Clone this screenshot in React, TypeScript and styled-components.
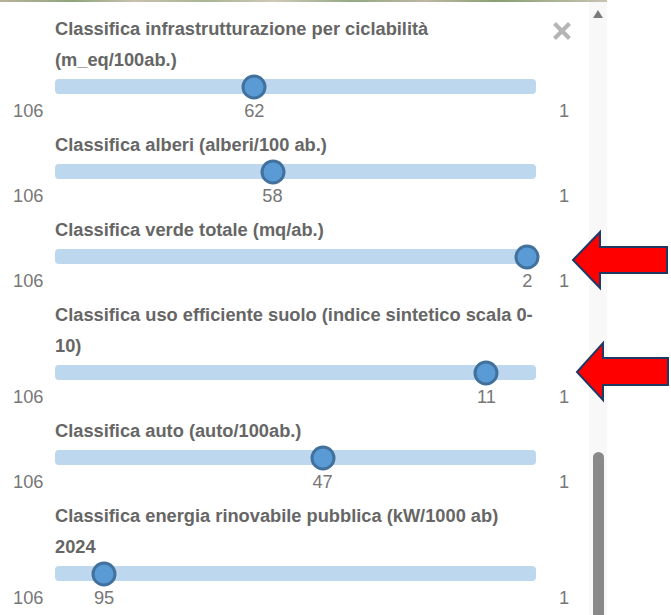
import React from 'react'
import styled, { createGlobalStyle } from 'styled-components'

const GlobalStyle = createGlobalStyle`
  html, body {
    margin: 0;
    padding: 0;
    background: #ffffff;
  }
  body {
    font-family: 'Liberation Sans', Arial, sans-serif;
  }
`

const MIN = 1
const MAX = 106

const rankings = [
  { title: 'Classifica infrastrutturazione per ciclabilità (m_eq/100ab.)', value: 62 },
  { title: 'Classifica alberi (alberi/100 ab.)', value: 58 },
  { title: 'Classifica verde totale (mq/ab.)', value: 2 },
  { title: 'Classifica uso efficiente suolo (indice sintetico scala 0-\u200B10)', value: 11 },
  { title: 'Classifica auto (auto/100ab.)', value: 47 },
  { title: 'Classifica energia rinovabile pubblica (kW/1000 ab) 2024', value: 95 },
]

const Page = styled.div`
  position: relative;
  width: 671px;
  height: 615px;
  overflow: hidden;
  background: #ffffff;
`

const MapEdge = styled.div`
  width: 607px;
  height: 2px;
  background: linear-gradient(
    90deg,
    #b8b29c 0%,
    #8fa57c 12%,
    #c7c0ad 22%,
    #a9b594 34%,
    #cfc8b8 45%,
    #93a983 58%,
    #bdb6a2 70%,
    #88a072 82%,
    #c9c3b3 100%
  );
`

const Frame = styled.div`
  display: flex;
  width: 607px;
  height: 613px;
`

const Panel = styled.div`
  position: relative;
  width: 589px;
  padding-top: 11px;
  background: #ffffff;
  overflow: hidden;
`

const CloseButton = styled.div`
  position: absolute;
  top: 20px;
  right: 18px;
  width: 18px;
  height: 18px;
  cursor: pointer;
`

const Gutter = styled.div`
  width: 18px;
  height: 613px;
  overflow: hidden;
  background: #f8f8f8;
  display: flex;
  flex-direction: column;
  align-items: center;
  padding-top: 8px;
  box-sizing: border-box;
`

const UpArrow = styled.div`
  width: 0;
  height: 0;
  border-left: 5px solid transparent;
  border-right: 5px solid transparent;
  border-bottom: 8px solid #7a7a7a;
`

const Thumb = styled.div`
  flex: none;
  margin-top: auto;
  margin-bottom: -12px;
  width: 11px;
  height: 175px;
  border-radius: 6px;
  background: #898989;
`

const Block = styled.div`
  display: grid;
  grid-template-columns: 55px 481px 1fr;
  padding-bottom: 7px;
`

const Title = styled.div`
  grid-column: 2;
  font-size: 18.25px;
  font-weight: bold;
  line-height: 31px;
  color: #666666;
`

const Track = styled.div`
  grid-column: 2;
  position: relative;
  margin-top: 4px;
  height: 15px;
  border-radius: 4px;
  background: #bdd7ee;
`

const Handle = styled.div`
  position: absolute;
  top: 50%;
  width: 25px;
  height: 25px;
  box-sizing: border-box;
  border: 3px solid #41719c;
  border-radius: 50%;
  background: #5b9bd5;
  transform: translate(-50%, -50%);
`

const ScaleText = styled.div<{ $col: number; $pad?: number }>`
  grid-column: ${p => p.$col};
  position: relative;
  margin-top: 6px;
  height: 22px;
  padding-left: ${p => p.$pad || 0}px;
  font-size: 18.25px;
  line-height: 22px;
  color: #777777;
`

const CurrentValue = styled.span`
  position: absolute;
  top: 0;
  transform: translateX(-50%);
  white-space: nowrap;
`

const Callout = styled.svg`
  position: absolute;
  overflow: visible;
`

const handleOffset = (value: number) => {
  const f = (MAX - value) / (MAX - MIN)
  return -1 + 478 * f
}

const RankSlider = ({ title, value }: { title: string; value: number }) => {
  const left = handleOffset(value)
  return (
    <Block>
      <Title>{title}</Title>
      <Track>
        <Handle style={{ left: `${left}px` }} />
      </Track>
      <ScaleText $col={1} $pad={13}>{MAX}</ScaleText>
      <ScaleText $col={2}>
        <CurrentValue style={{ left: `${left}px` }}>{value}</CurrentValue>
      </ScaleText>
      <ScaleText $col={3} $pad={23}>{MIN}</ScaleText>
    </Block>
  )
}

const App = () => {
  return (
    <Page>
      <GlobalStyle />
      <MapEdge />
      <Frame>
        <Panel>
          <CloseButton>
            <svg width="18" height="18" viewBox="0 0 18 18">
              <path d="M3 3 L15 15 M15 3 L3 15" stroke="#b5b5b5" strokeWidth="4.2" strokeLinecap="square" />
            </svg>
          </CloseButton>
          {rankings.map(r => (
            <RankSlider key={r.title} title={r.title} value={r.value} />
          ))}
        </Panel>
        <Gutter>
          <UpArrow />
          <Thumb />
        </Gutter>
      </Frame>

      <Callout style={{ left: 570, top: 229 }} width="101" height="62" viewBox="0 0 101 62">
        <polygon
          points="3,31 30,3 30,18 97,18 97,44 30,44 30,59"
          fill="#ff0000"
          stroke="#1f3864"
          strokeWidth="2"
        />
      </Callout>
      <Callout style={{ left: 574, top: 341 }} width="97" height="62" viewBox="0 0 97 62">
        <polygon
          points="3,31 29,2 29,17 94,17 94,44 29,44 29,59"
          fill="#ff0000"
          stroke="#1f3864"
          strokeWidth="2"
        />
      </Callout>
    </Page>
  )
}

export default App
